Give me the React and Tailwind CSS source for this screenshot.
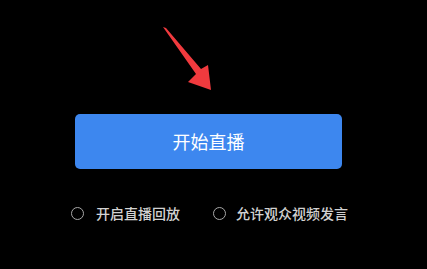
export default function App() {
  return (
    <div className="relative w-[427px] h-[269px] bg-black overflow-hidden" style={{ fontFamily: '"Noto Sans CJK SC", "Noto Sans", sans-serif' }}>
      <svg className="absolute left-0 top-0" width="427" height="269" viewBox="0 0 427 269">
        <polygon points="163,27 166,28 201,69 208,65 211,90 188,82 196,74" fill="#f03a3e" />
      </svg>
      <div className="pt-[114px] pl-[75px]">
        <button className="w-[267px] h-[55px] rounded-[5px] bg-[#3d87ef] text-white text-[18px] flex items-center justify-center">
          开始直播
        </button>
        <div className="mt-[34px] flex items-center text-[14px] font-medium text-[#d2d2d2] -ml-[4px]">
          <div className="flex items-center gap-[12px]">
            <span className="w-[13px] h-[13px] rounded-full border-[1.5px] border-[#a8a8a8]" />
            <span>开启直播回放</span>
          </div>
          <div className="flex items-center gap-[10px] ml-[33px]">
            <span className="w-[13px] h-[13px] rounded-full border-[1.5px] border-[#a8a8a8]" />
            <span>允许观众视频发言</span>
          </div>
        </div>
      </div>
    </div>
  );
}
